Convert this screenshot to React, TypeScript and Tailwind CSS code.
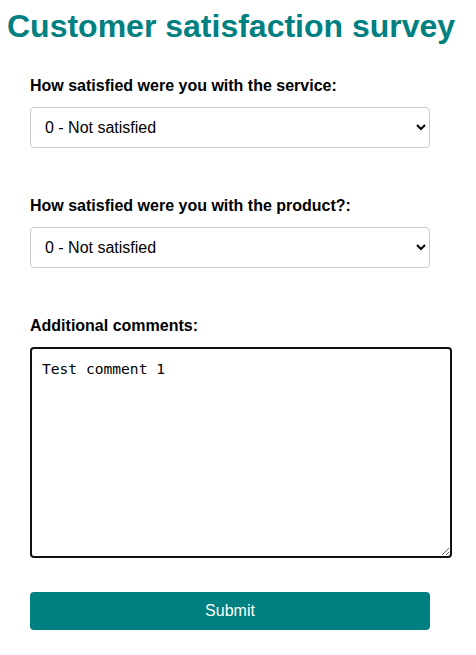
import React from "react";

const App = () => {
  const [service, setService] = React.useState("0");
  const [product, setProduct] = React.useState("0");
  const [comment, setComment] = React.useState("Test comment 1");

  const options = [
    "0 - Not satisfied",
    "1 - Somewhat satisfied",
    "2 - Satisfied",
    "3 - Very satisfied",
  ];

  return (
    <div
      className="w-[476px] h-[655px] bg-white text-black"
      style={{ fontFamily: '"Liberation Sans", Arial, sans-serif' }}
    >
      <h1 className="pt-2 pl-[7px] text-[32px] leading-[36px] font-bold text-[#008080]">
        Customer satisfaction survey
      </h1>
      <form className="mt-[33px] px-[30px] w-[460px] flex flex-col" onSubmit={(e) => e.preventDefault()}>
        <label className="block text-[16px] leading-[18px] font-bold mb-3">
          How satisfied were you with the service:
        </label>
        <select
          value={service}
          onChange={(e) => setService(e.target.value)}
          className="w-[400px] h-[41px] px-[10px] text-[16px] border border-[#ccc] rounded-[4px] bg-white"
        >
          {options.map((o, i) => (
            <option key={i} value={String(i)}>
              {o}
            </option>
          ))}
        </select>

        <label className="block text-[16px] leading-[18px] font-bold mt-[49px] mb-3">
          How satisfied were you with the product?:
        </label>
        <select
          value={product}
          onChange={(e) => setProduct(e.target.value)}
          className="w-[400px] h-[41px] px-[10px] text-[16px] border border-[#ccc] rounded-[4px] bg-white"
        >
          {options.map((o, i) => (
            <option key={i} value={String(i)}>
              {o}
            </option>
          ))}
        </select>

        <label className="block text-[16px] leading-[18px] font-bold mt-[49px] mb-3">
          Additional comments:
        </label>
        <textarea
          value={comment}
          onChange={(e) => setComment(e.target.value)}
          className="w-[422px] h-[211px] px-[10px] pt-[11px] pb-[10px] border-2 border-[#111] rounded-[4px] text-[14.6px] leading-[18px] outline-none"
          style={{ fontFamily: '"DejaVu Sans Mono", monospace' }}
        />

        <button
          type="submit"
          className="mt-[34px] w-[400px] h-[38px] bg-[#008080] text-white text-[16px] rounded-[4px]"
        >
          Submit
        </button>
      </form>
    </div>
  );
};

export default App;
